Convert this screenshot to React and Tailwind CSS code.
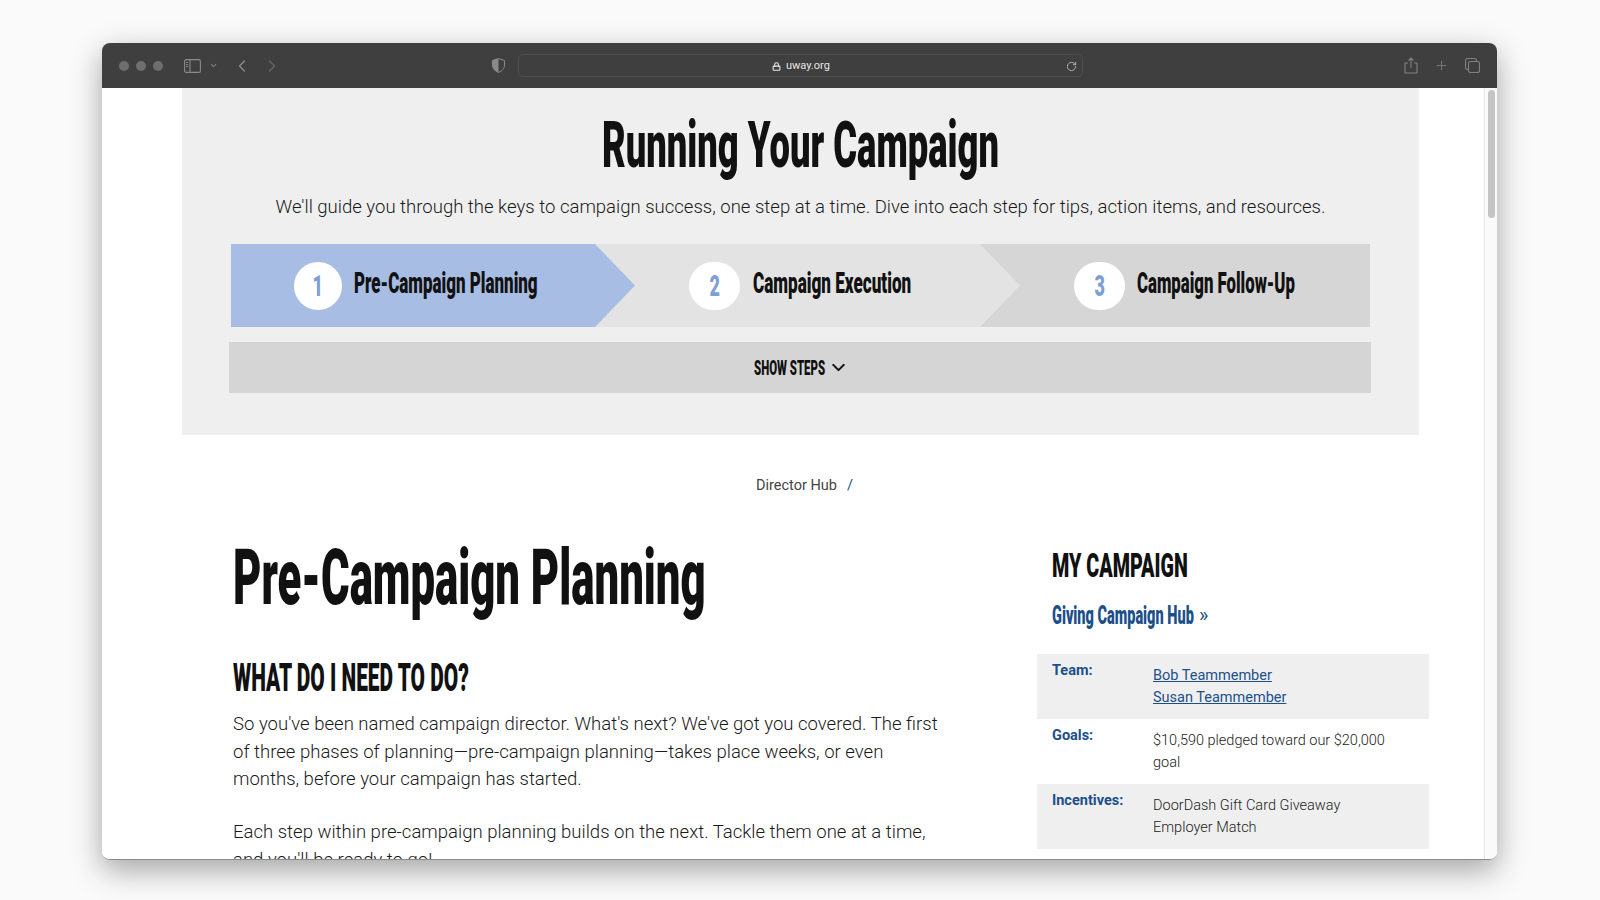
import { ChevronDown, ChevronLeft, ChevronRight, Lock, Plus, RotateCw } from "lucide-react";

const HEAD = "font-['Roboto',sans-serif] font-black";
const BODY = "font-['Roboto',sans-serif] font-light";

// steps of the campaign, arrows sit over the next step
const steps = [
  { n: "1", label: "Pre-Campaign Planning", box: "w-[364px] bg-[#a7bde3] pl-[63px]", arrow: "bg-[#a7bde3]", circle: "w-[48px]", text: "ml-[12px] w-[180px] scale-x-[0.585]" },
  { n: "2", label: "Campaign Execution", box: "w-[385px] bg-[#e3e3e3] pl-[94px]", arrow: "bg-[#e3e3e3]", circle: "w-[51px]", text: "ml-[13px] w-[158px] scale-x-[0.59]" },
  { n: "3", label: "Campaign Follow-Up", box: "flex-1 bg-[#d6d6d6] pl-[94px]", arrow: "", circle: "w-[51px]", text: "ml-[12px] w-[158px] scale-x-[0.578]" },
];

function Toolbar() {
  return (
    <div className="flex h-[45px] shrink-0 items-center bg-[#3f3f3f] pl-[17px] pr-[17px] text-[#7d7d7d]">
      <div className="flex w-[373px] items-center">
        <span className="h-[10px] w-[10px] rounded-full bg-[#6e6e6e]" />
        <span className="ml-[7px] h-[10px] w-[10px] rounded-full bg-[#6e6e6e]" />
        <span className="ml-[7px] h-[10px] w-[10px] rounded-full bg-[#6e6e6e]" />
        <svg className="ml-[21px]" width="17" height="14" viewBox="0 0 17 14" fill="none" stroke="#8a8a8a" strokeWidth="1.1">
          <rect x="0.6" y="0.6" width="15.8" height="12.8" rx="1.5" />
          <path d="M6 1v12M2.2 3.5h2M2.2 5.500h2M2.2 7.500h2" />
        </svg>
        <ChevronDown className="ml-[8px]" size={9} strokeWidth={3} />
        <ChevronLeft className="ml-[14px]" size={20} strokeWidth={1.6} color="#8a8a8a" />
        <ChevronRight className="ml-[10px]" size={20} strokeWidth={1.6} color="#666666" />
      </div>
      <svg width="13" height="15" viewBox="0 0 13 15">
        <path d="M6.5 0.5L12.5 2.5V7c0 3.5-2.5 6-6 7.5C3 13 0.5 10.500.5 7V2.500z" fill="none" stroke="#8a8a8a" />
        <path d="M6.500.5L.5 2.500V7c0 3.500 2.500 6 6 7.500z" fill="#8a8a8a" />
      </svg>
      <div className="ml-[13px] flex h-[23px] w-[565px] items-center rounded-[5px] border border-[#4f4f4f] pl-[253px] pr-[5px] pt-[2px] font-['Roboto',sans-serif] text-[11px] text-[#e6e6e6]">
        <Lock size={9} strokeWidth={3} />
        <span className="ml-[5px]">uway.org</span>
        <RotateCw className="ml-auto" size={11} strokeWidth={1.8} color="#c4c4c4" />
      </div>
      <div className="ml-auto flex items-center gap-[16px]">
        <svg width="14" height="17" viewBox="0 0 14 17" fill="none" stroke="#808080" strokeWidth="1.1">
          <path d="M4 6H1v10h12V6h-3M7 11V1M4.500 3.500L7 1l2.500 2.500" />
        </svg>
        <Plus size={15} strokeWidth={1.3} color="#808080" />
        <svg width="15" height="15" viewBox="0 0 15 15" fill="none" stroke="#808080" strokeWidth="1.1">
          <rect x="3.500" y="3.500" width="11" height="11" rx="2" />
          <path d="M3.500 11.500H2.500a2 2 0 0 1-2-2v-7a2 2 0 0 1 2-2h7a2 2 0 0 1 2 2v1" />
        </svg>
      </div>
    </div>
  );
}

function StepBar() {
  return (
    <div className="mx-[3px] flex h-[83px] bg-[#d6d6d6]">
      {steps.map((s) => (
        <div key={s.n} className={`relative flex items-center ${s.box}`}>
          <span className={`flex h-[48px] shrink-0 items-center justify-center rounded-full bg-white ${s.circle}`}>
            <span className={`${HEAD} scale-x-[0.6] text-[30px] leading-none text-[#7d9fd8]`}>{s.n}</span>
          </span>
          <span className={`${HEAD} mb-[4px] inline-block origin-left whitespace-nowrap text-[29px] leading-none text-[#111] ${s.text}`}>{s.label}</span>
          {s.arrow && <div className={`absolute left-full top-0 z-10 h-full w-[40px] [clip-path:polygon(0_0,100%_50%,0_100%)] ${s.arrow}`} />}
        </div>
      ))}
    </div>
  );
}

function CampaignTable() {
  const label = "w-[101px] shrink-0 font-['Roboto',sans-serif] text-[14.5px] font-bold leading-[21px] text-[#1c4f8a]";
  const rowCls = "flex h-[65px] pl-[15px] pt-[6px]";
  return (
    <div className={`${BODY} text-[14.5px] leading-[21.6px] text-[#222]`}>
      <div className={`${rowCls} bg-[#efeff0]`}>
        <div className={label}>Team:</div>
        <div className="pt-[5px] font-normal text-[#1c4f8a] underline">
          <div>Bob Teammember</div>
          <div>Susan Teammember</div>
        </div>
      </div>
      <div className={rowCls}>
        <div className={label}>Goals:</div>
        <div className="w-[250px] pt-[5px]">$10,590 pledged toward our $20,000 goal</div>
      </div>
      <div className={`${rowCls} bg-[#efeff0]`}>
        <div className={label}>Incentives:</div>
        <div className="pt-[5px]">
          <div>DoorDash Gift Card Giveaway</div>
          <div>Employer Match</div>
        </div>
      </div>
    </div>
  );
}

export default function App() {
  return (
    <div className="h-[900px] overflow-hidden bg-[#fafafa] pl-[102px] pr-[103px] pt-[43px]">
      <div className="flex h-[817px] flex-col overflow-hidden rounded-[8px] border-b border-[#8a8a8a] shadow-[0_10px_30px_rgba(0,0,0,0.35)]">
        <Toolbar />
        <div className="flex min-h-0 flex-1 bg-white">
          <div className="min-w-0 flex-1 overflow-hidden pl-[80px] pr-[65px]">
            {/* GREY HERO PANEL */}
            <div className="h-[347px] bg-[#efefef] px-[46px] text-center">
              <h1 className={`${HEAD} origin-center scale-x-[0.568] whitespace-nowrap pt-[22px] text-[64px] leading-[72px] text-[#111]`}>Running Your Campaign</h1>
              <p className={`${BODY} mt-[11px] whitespace-nowrap text-[18.55px] leading-[28px] text-[#1a1a1a]`}>We'll guide you through the keys to campaign success, one step at a time. Dive into each step for tips, action items, and resources.</p>
              <div className="mt-[23px]"><StepBar /></div>
              <button className="mx-[1px] mt-[15px] flex h-[51px] w-[1142px] items-center justify-center bg-[#d5d5d5] text-[#111]">
                <span className={`${HEAD} ml-[2px] inline-block w-[73px] origin-left scale-x-[0.57] whitespace-nowrap text-left text-[20px] uppercase leading-none`}>Show Steps</span>
                <ChevronDown className="ml-[1px]" size={21} strokeWidth={2.4} />
              </button>
            </div>

            <div className={`${BODY} mt-[40px] flex justify-center pl-[8px] text-[14.5px] font-normal leading-[22px] text-[#444]`}>
              Director Hub<span className="ml-[10px] text-[#1c4f8a]">/</span>
            </div>

            <div className="mt-[36px] flex">
              {/* MAIN COPY */}
              <div className="ml-[51px] w-[707px] shrink-0">
                <h2 className={`${HEAD} origin-left scale-x-[0.567] whitespace-nowrap text-[77px] leading-[90px] text-[#111]`}>Pre-Campaign Planning</h2>
                <h3 className={`${HEAD} mt-[32px] origin-left scale-x-[0.55] whitespace-nowrap text-[38px] uppercase leading-[46px] text-[#111]`}>What do I need to do?</h3>
                <p className={`${BODY} mt-[10px] text-[18.55px] leading-[27.7px] text-[#1a1a1a]`}>So you've been named campaign director. What's next? We've got you covered. The first of three phases of planning—pre-campaign planning—takes place weeks, or even months, before your campaign has started.</p>
                <p className={`${BODY} mt-[25px] text-[18.55px] leading-[27.7px] text-[#1a1a1a]`}>Each step within pre-campaign planning builds on the next. Tackle them one at a time, and you'll be ready to go!</p>
              </div>
              {/* SIDEBAR */}
              <div className="ml-[97px] w-[392px] shrink-0 pt-[12px]">
                <div className="pl-[15px]">
                  <h3 className={`${HEAD} origin-left scale-x-[0.58] whitespace-nowrap text-[34px] uppercase leading-[40px] text-[#111]`}>My Campaign</h3>
                  <div className="mt-[13px] flex h-[34px] items-center text-[#1c4f8a]">
                    <span className={`${HEAD} inline-block w-[145px] origin-left scale-x-[0.558] whitespace-nowrap text-[26px] leading-none`}>Giving Campaign Hub</span>
                    <span className="ml-[2px] font-['Roboto',sans-serif] text-[20px]">»</span>
                  </div>
                </div>
                <div className="mt-[22px]"><CampaignTable /></div>
              </div>
            </div>
          </div>
          {/* SCROLLBAR */}
          <div className="w-[13px] shrink-0 border-l border-[#e8e8e8] bg-[#fafafa] pl-[3px] pt-[2px]">
            <div className="h-[128px] w-[7px] rounded-full bg-[#c4c4c4]" />
          </div>
        </div>
      </div>
    </div>
  );
}
